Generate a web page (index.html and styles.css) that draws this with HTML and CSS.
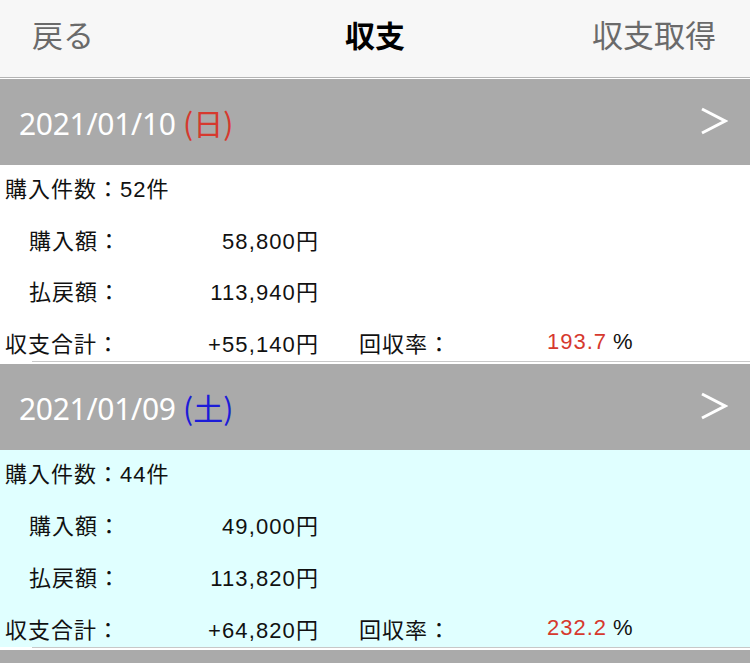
FILE: index.html
```html
<!DOCTYPE html>
<html lang="ja">
<head>
<meta charset="utf-8">
<link rel="stylesheet" href="styles.css">
</head>
<body>
<div class="nav">
  <span class="nav-left">戻る</span>
  <span class="nav-title">収支</span>
  <span class="nav-right">収支取得</span>
</div>

<div class="section">
  <div class="day-header">
    <span class="date">2021/01/10 <span class="sun">(日)</span></span>
    <svg class="chev" width="28" height="30" viewBox="0 0 28 30"><polyline points="2,2 25,14 2,26" fill="none" stroke="#ffffff" stroke-width="3"/></svg>
  </div>
  <div class="body">
    <div class="row"><span>購入件数：52件</span></div>
    <div class="row">
      <span class="label indent">購入額：</span><span class="val">58,800円</span>
    </div>
    <div class="row">
      <span class="label indent">払戻額：</span><span class="val">113,940円</span>
    </div>
    <div class="row">
      <span class="label">収支合計：</span><span class="val">+55,140円</span>
      <span class="rlabel">回収率：</span><span class="rval">193.7</span><span class="pct">%</span>
    </div>
  </div>
  <div class="sep"></div>
</div>

<div class="section">
  <div class="day-header">
    <span class="date">2021/01/09 <span class="sat">(土)</span></span>
    <svg class="chev" width="28" height="30" viewBox="0 0 28 30"><polyline points="2,2 25,14 2,26" fill="none" stroke="#ffffff" stroke-width="3"/></svg>
  </div>
  <div class="body cyan">
    <div class="row"><span>購入件数：44件</span></div>
    <div class="row">
      <span class="label indent">購入額：</span><span class="val">49,000円</span>
    </div>
    <div class="row">
      <span class="label indent">払戻額：</span><span class="val">113,820円</span>
    </div>
    <div class="row">
      <span class="label">収支合計：</span><span class="val">+64,820円</span>
      <span class="rlabel">回収率：</span><span class="rval">232.2</span><span class="pct">%</span>
    </div>
  </div>
  <div class="sep"></div>
</div>

<div class="section">
  <div class="day-header tail"></div>
</div>
</body>
</html>
```

FILE: styles.css
```css
html, body {
  margin: 0;
  padding: 0;
  background: #ffffff;
  overflow: hidden;
}
body {
  width: 750px;
  height: 665px;
  font-family: "Liberation Sans", "Noto Sans CJK JP", sans-serif;
  color: #111;
  text-spacing-trim: space-all;
}
.nav {
  height: 77px;
  background: #f7f7f7;
  border-bottom: 1px solid #b4b4b4;
  display: flex;
  align-items: flex-start;
  justify-content: space-between;
  padding: 0 34px 0 32px;
  position: relative;
  font-family: "Noto Sans CJK JP", sans-serif;
  font-size: 31px;
  line-height: 68px;
}
.nav-left, .nav-right {
  color: #6a6a6a;
  font-weight: 400;
}
.nav-title {
  position: absolute;
  left: 0;
  right: 0;
  top: 0;
  text-align: center;
  font-weight: 700;
  font-size: 30px;
  color: #000;
  pointer-events: none;
}
.section {
  display: flex;
  flex-direction: column;
}
.day-header {
  margin-top: 1px;
  height: 86px;
  background: #aaaaaa;
  display: flex;
  align-items: center;
  justify-content: space-between;
  padding: 0 22px 0 19px;
  color: #fff;
}
.section + .section .day-header {
  margin-top: 2px;
}
.day-header.tail {
  height: 13px;
}
.date {
  font-family: "Noto Sans", sans-serif;
  font-size: 30px;
  letter-spacing: -0.3px;
}
.sun {
  color: #d6392e;
  font-family: "Noto Sans CJK JP", sans-serif;
  letter-spacing: 0;
}
.sat {
  color: #1c1cd8;
  font-family: "Noto Sans CJK JP", sans-serif;
  letter-spacing: 0;
}
.chev {
  display: block;
}
.body {
  background: #ffffff;
  height: 196px;
  padding: 3px 0 0 5px;
  box-sizing: border-box;
  display: flex;
  flex-direction: column;
  gap: 14px;
  font-size: 22px;
  letter-spacing: 1px;
}
.body.cyan {
  background: #e0ffff;
  height: 197px;
}
.row {
  height: 38px;
  display: flex;
  align-items: center;
}
.label {
  width: 120px;
}
.label.indent {
  padding-left: 24px;
  width: 96px;
}
.val {
  width: 194px;
  text-align: right;
  letter-spacing: 1.1px;
}
.rlabel {
  margin-left: 40px;
  width: 120px;
}
.rval {
  width: 128px;
  text-align: right;
  color: #d6392e;
}
.pct {
  margin-left: 6px;
}
.sep {
  height: 1px;
  margin-left: 32px;
  background: #c8c8c8;
}
```
